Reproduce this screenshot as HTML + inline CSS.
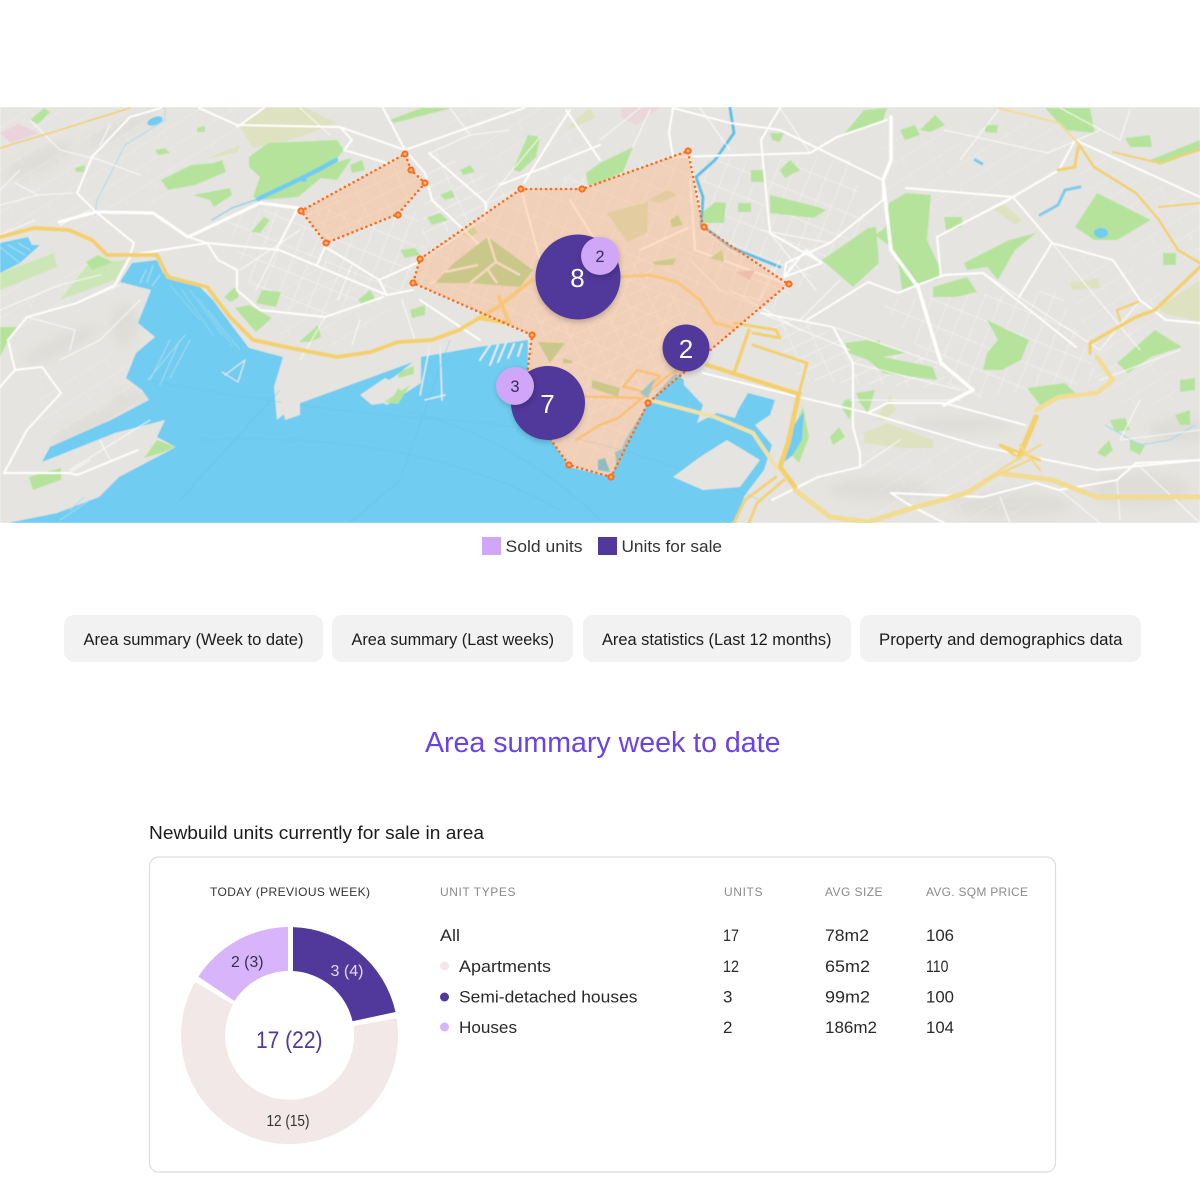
<!DOCTYPE html>
<html lang="en"><head><meta charset="utf-8"><title>Area summary</title>
<style>html,body{margin:0;padding:0;background:#fff}svg{display:block}text{font-family:"Liberation Sans",sans-serif}</style></head>
<body>
<svg xmlns="http://www.w3.org/2000/svg" width="1200" height="1200" viewBox="0 0 1200 1200">
<defs>
<filter id="b" x="0" y="0" width="100%" height="100%"><feGaussianBlur stdDeviation="0.55"/></filter>
<filter id="h" x="-30%" y="-30%" width="160%" height="160%"><feGaussianBlur stdDeviation="5"/></filter>
<filter id="s" x="-30%" y="-30%" width="160%" height="160%"><feGaussianBlur stdDeviation="3"/></filter>
<clipPath id="m"><rect x="0" y="107" width="1200" height="416"/></clipPath>
<pattern id="g1" width="22" height="13" patternUnits="userSpaceOnUse" patternTransform="rotate(-25)"><path d="M0 0H22M0 0V13" stroke="#fff" stroke-width=".9" fill="none" opacity=".7"/></pattern>
<pattern id="g2" width="16" height="24" patternUnits="userSpaceOnUse" patternTransform="rotate(22)"><path d="M0 0H16M0 0V24" stroke="#fff" stroke-width=".9" fill="none" opacity=".65"/></pattern>
<pattern id="g3" width="34" height="18" patternUnits="userSpaceOnUse" patternTransform="rotate(-32)"><path d="M0 0H34M0 0V9" stroke="#fff" stroke-width=".8" fill="none" opacity=".45"/></pattern>
</defs>
<rect width="1200" height="1200" fill="#fff"/>
<g clip-path="url(#m)"><g filter="url(#b)">
<rect x="0" y="107" width="1200" height="416" fill="#e5e4e0"/>
<!-- hill shade -->
<g fill="#cfcdc6" opacity=".3" filter="url(#h)">
<ellipse cx="40" cy="160" rx="36" ry="9" transform="rotate(-25 40 160)"/><ellipse cx="120" cy="130" rx="40" ry="6" transform="rotate(-25 120 130)"/>
<ellipse cx="60" cy="345" rx="40" ry="8" transform="rotate(-25 60 345)"/><ellipse cx="125" cy="325" rx="12" ry="20"/>
<ellipse cx="130" cy="400" rx="18" ry="8"/><ellipse cx="90" cy="425" rx="40" ry="8" transform="rotate(-25 90 425)"/>
<ellipse cx="880" cy="490" rx="50" ry="10"/><ellipse cx="1010" cy="505" rx="60" ry="12"/><ellipse cx="1140" cy="490" rx="50" ry="16"/>
<ellipse cx="1180" cy="430" rx="30" ry="12"/><ellipse cx="960" cy="425" rx="50" ry="6"/></g>
<!-- street grids -->
<g>
<polygon points="413,283 420,259 521,189 688,151 703,227 788,284 648,403 611,477 569,465 532,335" fill="url(#g2)"/>
<polygon points="530,300 640,250 700,330 640,400 570,420" fill="url(#g1)"/>
<polygon points="301,211 405,154 425,183 398,214 326,243" fill="url(#g1)"/>
<polygon points="430,150 520,190 420,250" fill="url(#g1)"/>
<polygon points="420,108 600,108 580,180 520,185" fill="url(#g3)"/>
<polygon points="220,210 420,210 410,290 330,320 260,310" fill="url(#g2)"/>
<polygon points="300,240 400,300 340,350 260,330" fill="url(#g3)"/>
<polygon points="700,160 850,160 880,260 820,270 760,320 710,240" fill="url(#g2)"/>
<polygon points="760,310 930,360 960,390 800,380" fill="url(#g1)"/>
<polygon points="880,300 1060,290 1100,380 960,400" fill="url(#g2)"/>
<polygon points="880,130 1060,120 1050,190 890,230" fill="url(#g3)"/>
<polygon points="1060,240 1160,280 1180,410 1100,400" fill="url(#g3)"/>
<polygon points="1050,130 1200,200 1200,280 1130,250" fill="url(#g3)"/>
<polygon points="0,110 240,108 230,170 90,230 0,230" fill="url(#g3)"/>
<polygon points="0,290 120,250 130,270 30,330 0,340" fill="url(#g3)"/>
<polygon points="40,375 140,350 140,420 40,440" fill="url(#g3)"/>
<polygon points="860,430 1000,440 1040,520 880,520" fill="url(#g3)"/>
</g>
<!-- khaki -->
<g fill="#dfe2c0">
<polygon points="239,125 264,108 306,108 337,123 291,140 253,148"/>
<polygon points="864,433 887,423 933,440 933,448 902,448 864,443"/>
<polygon points="1159,307 1200,280 1200,322 1163,313"/>
<polygon points="207,158 240,145 238,152 215,157"/>
<polygon points="566,128 590,108 596,118 572,128"/>
<polygon points="992,208 1005,205 1022,220 1015,225"/>
<polygon points="1070,283 1098,278 1100,288 1072,290"/>
<polygon points="876,420 890,395 896,410 885,420"/>
<polygon points="880,366 896,362 898,372 884,372" />
</g>
<polygon points="0,133 19,124 38,133 11,143" fill="#ecd2da"/>
<polygon points="622,108 660,107 636,125 622,118" fill="#ecd2da" opacity=".8"/>
<!-- light green -->
<g fill="#cde6b8">
<polygon points="0,273 54,253 57,267 0,290"/>
<polygon points="60,300 88,264 126,260 115,280"/>
</g>
<!-- greens -->
<g fill="#b5e39c">
<polygon points="249,157 268,143 337,140 344,150 333,163 352,158 337,180 321,178 298,197 260,200 253,197 260,177 249,167"/>
<polygon points="161,180 191,165 214,163 222,160 226,172 195,185 168,190"/>
<polygon points="193,195 230,188 232,195 214,207 210,200"/>
<polygon points="251,232 264,217 270,220 260,233"/>
<polygon points="235,308 249,305 272,318 256,332"/>
<polygon points="256,303 262,290 281,292 276,307"/>
<polygon points="299,342 318,325 321,337 310,342"/>
<polygon points="224,297 235,287 239,297 230,302"/>
<polygon points="86,262 98,255 113,262 92,270"/>
<polygon points="0,327 17,327 8,340 0,357"/>
<polygon points="29,477 61,468 61,480 33,490"/>
<polygon points="144,458 157,440 176,447 161,453"/>
<polygon points="390,120 421,108 452,108 394,123"/>
<polygon points="513,170 528,135 540,137 536,157 520,172"/>
<polygon points="600,163 633,147 623,172 600,183 588,185 586,173"/>
<polygon points="427,217 440,213 448,220 432,225"/>
<polygon points="462,233 472,226 478,232 470,238"/>
<polygon points="845,133 864,110 887,108 883,120 849,133"/>
<polygon points="822,260 868,228 876,227 879,263 853,287"/>
<polygon points="889,203 906,193 931,195 927,240 941,270 937,280 918,283 902,290 899,267 891,247 875,235 885,228"/>
<polygon points="770,195 818,207 826,210 814,218 770,213"/>
<rect x="751" y="170" width="14" height="12"/>
<rect x="738" y="203" width="13" height="9"/>
<polygon points="703,212 715,202 726,203 724,223 703,223"/>
<polygon points="770,133 784,133 780,142 772,140"/>
<polygon points="933,287 967,277 977,292 956,297 933,297"/>
<polygon points="944,217 962,217 962,227 946,230"/>
<polygon points="964,263 1009,240 1036,233 1015,250 998,280 987,267 967,270"/>
<polygon points="1075,227 1097,193 1151,220 1117,240 1094,240"/>
<rect x="1163" y="253" width="13" height="12"/>
<polygon points="845,343 868,340 906,353 883,357 933,367 937,380 883,373 868,360 849,353"/>
<polygon points="987,320 1029,340 1021,360 1002,370 983,370 987,353 998,340"/>
<polygon points="1027,388 1065,383 1075,393 1040,405"/>
<polygon points="1117,363 1155,330 1182,347 1151,357 1128,373"/>
<polygon points="1097,453 1109,440 1113,450 1105,457"/>
<polygon points="830,437 839,427 845,437 833,445"/>
<polygon points="845,400 853,398 850,420 841,407"/>
<polygon points="856,393 875,390 868,413 860,403"/>
<polygon points="784,447 803,407 809,437 799,463"/>
<polygon points="1150,160 1200,140 1200,150 1160,165"/>
<polygon points="1125,138 1150,135 1152,147 1130,147"/>
<polygon points="1045,108 1090,108 1095,133 1065,130"/>
<polygon points="985,125 998,125 997,133 985,132"/>
<polygon points="920,130 935,115 945,125 930,132"/>
<polygon points="780,170 790,160 800,170 785,178"/>
<polygon points="1175,415 1190,410 1190,425 1180,425"/>
<polygon points="900,130 915,125 920,135 905,140"/>
<polygon points="1110,420 1125,418 1130,430 1115,432"/>
<polygon points="1130,440 1145,445 1140,455 1130,450"/>
<polygon points="30,120 44,108 50,112 38,124" />
<polygon points="375,480 385,470 395,480 380,487" />
<polygon points="155,150 165,148 170,153 158,155"/>
<polygon points="197,128 205,126 205,132 197,132" />
<polygon points="75,168 85,165 84,172 76,172"/>
<polygon points="235,375 250,368 250,378 238,380"/>
<polygon points="382,395 396,385 402,392 388,400"/>
<polygon points="398,372 414,366 414,374 398,378"/>
<polygon points="350,165 362,160 365,170 352,173"/>
<polygon points="460,170 470,165 475,172 463,175"/>
<polygon points="400,250 415,248 420,255 405,258"/>
<polygon points="440,195 452,190 455,197 445,200"/>
<polygon points="358,300 370,290 375,298 362,305"/>
<polygon points="410,310 425,305 425,315 412,318"/>
<polygon points="860,345 880,340 880,352 860,352"/>
<polygon points="1180,380 1195,378 1195,390 1180,392"/>
</g>
<!-- water -->
<g fill="#70ccf0">
<path d="M8 523L57 513L99 497L119 477L176 447L157 437L165 420L115 433L42 462L50 447L111 420L149 400L142 390L126 378L136 353L155 337L138 323L151 290L120 282L132 263L157 260L163 273L180 282L200 287L213 300L233 327L249 348L283 357L274 387L277 420L295 405L413 362L394 377L367 393L387 405L421 383L421 357L478 347L528 340L528 367L551 440L570 467L611 477L625 440L648 403L675 373L684 380L702 392L704 400L735 415L748 393L775 400L770 415L755 425L772 445L764 470L745 495L734 523Z"/>
<path d="M0 243L28 237L32 245L40 245L20 263L0 273Z"/>
<path d="M790 430L804 412L802 440L792 456L784 462Z"/>
<ellipse cx="155" cy="121" rx="8" ry="4" transform="rotate(-20 155 121)"/>
<ellipse cx="1101" cy="233" rx="7" ry="5"/>
<ellipse cx="304" cy="180" rx="3" ry="2"/><rect x="975" y="158" width="10" height="3" transform="rotate(30 975 158)"/>
</g>
<g fill="none" stroke-linecap="round" stroke-linejoin="round">
<path d="M258 199L298 180L318 170L336 160" stroke="#70ccf0" stroke-width="4.5"/>
<path d="M258 199L232 208L212 220" stroke="#7fcdee" stroke-width="1.3"/>
<path d="M730 108L734 133L715 160L696 177L703 197L701 225L730 247L780 267" stroke="#5cc0e6" stroke-width="3"/>
<path d="M1040 215L1058 205L1065 190L1080 187" stroke="#7ccbee" stroke-width="3"/>
<path d="M165 108L165 120L125 145L110 175L97 200L95 215" stroke="#b5d9ec" stroke-width="1.1"/>
<path d="M1105 425L1140 445L1170 440L1195 425" stroke="#a5d6f0" stroke-width="1.1"/>
<!-- piers -->
<path d="M182 290L213 335M190 290L222 335M198 298L232 345M208 310L240 350M170 285L200 320" stroke="#8ed6f2" stroke-width="1.1" stroke-dasharray="2 1"/>
<path d="M146 270L140 283M153 266L147 282M160 275L152 286" stroke="#a8def4" stroke-width="1.2"/>
<path d="M0 247L20 263M8 245L25 255M18 243L30 250" stroke="#a8def4" stroke-width="1.1"/>
<path d="M170 340L150 380M180 340L160 385M190 340L170 378M148 380L185 335" stroke="#a5dcf2" stroke-width="1"/>
<path d="M430 345L420 395M440 345L442 400M425 400L445 395" stroke="#e8edee" stroke-width="1.5"/>
<path d="M490 345L480 360M498 345L490 365M506 343L498 362M514 344L508 358M522 344L518 356" stroke="#e8edee" stroke-width="2"/>
<path d="M60 520L90 500M70 510L84 497" stroke="#a8def4" stroke-width="1"/>
<path d="M225 375L245 360L238 382L222 372" stroke="#dfe7e8" stroke-width="1.3"/>
<path d="M150 380Q300 410 450 420T760 500M200 440Q420 430 560 510M410 412Q520 440 600 520M450 340L400 480L350 523M280 390L180 500" stroke="#62bee4" stroke-width=".6" opacity=".55"/>
</g>
<!-- land overlays in bay -->
<g fill="#e5e4e0">
<polygon points="673,477 700,457 727,440 760,460 740,487 703,490"/>
<polygon points="684,378 730,395 745,392 735,418 717,413 697,423 703,405 684,385"/>
<polygon points="360,395 385,378 400,385 390,402 372,405"/>
<polygon points="283,357 305,350 300,385 286,395"/>
<polygon points="280,395 300,385 300,415 285,420"/>
</g>
<polygon points="384,402 410,385 398,404" fill="#b5e39c"/>
<!-- minor roads -->
<g fill="none" stroke="#fff" stroke-width="1.1" stroke-linecap="round" stroke-linejoin="round" opacity=".75">
<path d="M15 183L38 195L73 193M0 205L38 195M0 235L35 220M92 157L140 175M110 125L100 145"/>
<path d="M30 120L60 150L100 160M0 190L20 170M60 225L90 210"/>
<path d="M300 108L330 135M450 108L470 135L510 130M470 135L430 153M540 137L500 185L486 203"/>
<path d="M338 300L352 264M276 250L256 290M240 270L300 230M402 300L415 340M325 317L300 360M360 320L352 345"/>
<path d="M0 310L60 285L100 275M27 317L75 330L70 350M140 300L100 340L60 360M150 420L70 470M100 440L110 460"/>
<path d="M77 303L120 285M69 473L90 460"/>
<path d="M600 140L640 108M633 147L650 110M700 108L730 150M780 108L810 153M1060 108L1120 140L1130 110"/>
<path d="M761 230L830 243M770 233L816 290M853 363L960 390M833 327L937 363M761 313L850 350M850 400L960 400M860 467L900 440"/>
<path d="M1052 243L1090 290L1140 350M983 273L1100 350M1140 300L1100 350M1100 380L1180 350M944 130L1048 153L1100 130M1000 108L960 160M950 230L1010 200"/>
<path d="M1120 440L1200 430M1117 480L1120 520M1000 497L1010 523M1060 490L1100 523M1136 463L1200 523M1140 400L1120 440"/>
<path d="M780 260L760 300L720 290L690 260M737 255L700 227"/>
<path d="M840 280L800 320M730 290L800 330"/>
</g>
<!-- major roads -->
<g fill="none" stroke="#fff" stroke-linecap="round" stroke-linejoin="round">
<g stroke-width="1.9">
<path d="M130 255L134 243L96 212L77 193L92 157L130 117L161 108"/>
<path d="M188 237L207 243L279 250L387 295L413 290"/>
<path d="M130 255L207 243"/>
<path d="M207 243L218 260L237 270L237 290L260 310L325 317L383 297"/>
<path d="M8 340L27 317L77 303L115 285L130 257"/>
<path d="M8 340L15 370L0 387"/>
<path d="M15 370L42 367L61 393L27 430L4 473L69 473L77 475L138 450"/>
<path d="M199 108L237 125L340 127L405 150"/>
<path d="M264 108L237 127M340 127L352 140L344 150L387 163"/>
<path d="M383 108L405 150L425 173L432 200L482 247"/>
<path d="M405 150L524 108"/>
<path d="M429 153L486 203L486 217L417 263L379 280L387 295"/>
<path d="M524 183L555 133L570 110"/>
<path d="M566 110L600 160M500 185L600 145"/>
<path d="M298 208L276 250M325 247L317 265M325 247L352 263L379 280"/>
<path d="M673 108L730 123L780 130L883 180L883 200L830 243L786 263L784 277L806 250L822 263L784 277"/>
<path d="M673 108L669 133L673 157"/>
<path d="M673 157L810 153L837 137L887 120"/>
<path d="M780 108L761 140L770 233L822 263"/>
<path d="M807 320L868 282L898 293L918 285L944 275L983 273L1076 347"/>
<path d="M761 313L833 327L853 363L853 427L860 453L860 467L818 477L772 500"/>
<path d="M703 373L799 397L868 413L983 447L1097 470L1200 460"/>
<path d="M868 413L887 403L944 403L1025 425"/>
<path d="M937 237L1013 197L1052 243L1113 260L1140 300L1166 320L1200 323"/>
<path d="M937 237L941 277"/>
<path d="M1013 197L1059 170L1075 140L1200 197"/>
<path d="M906 188L1013 197"/>
<path d="M1052 243L1019 297"/>
<path d="M906 503L944 523M891 493L906 503M891 493L983 497L1036 483L1059 490L1117 480L1136 463L1200 460"/>
<path d="M521 189L540 260L560 300M688 151L700 210M570 200L620 280M690 180L695 250L790 285M688 228L640 250"/>
<path d="M420 300L480 340M490 270L430 283"/>
</g>
<path d="M59 222L96 212L153 213L188 237L260 203L298 208" stroke-width="3"/>
<path d="M891 117L891 160L883 180L891 250L918 287L941 363L973 390L944 405" stroke-width="3.5"/>
</g>
<!-- highways -->
<g fill="none" stroke-linecap="round" stroke-linejoin="round">
<path d="M0 148L50 133L130 108" stroke="#f3cf6b" stroke-width="1.6"/>
<path d="M0 237L34 228L69 230L92 240L107 255L157 255L168 277L207 287L230 317L253 340L291 348L337 357L371 352L398 342L432 340L459 330L498 307L532 280" stroke="#f4d06c" stroke-width="4"/>
<path d="M499 297L509 323L478 318" stroke="#f4d06c" stroke-width="4"/>
<path d="M707 365L795 393" stroke="#f3d06a" stroke-width="4.5"/>
<path d="M799 393L788 443L780 467L795 487" stroke="#f3d06a" stroke-width="5"/>
<path d="M753 345L807 363L799 393" stroke="#f3d06a" stroke-width="3"/>
<path d="M749 330L734 373" stroke="#f3d06a" stroke-width="3.5"/>
<path d="M734 323L776 330L780 338L753 333" stroke="#f3d06a" stroke-width="3"/>
<path d="M619 277L650 275L677 282L700 300L715 323L734 328" stroke="#f4d06c" stroke-width="3"/>
<path d="M650 400L715 417L753 433L776 467" stroke="#f3e1a4" stroke-width="4"/>
<path d="M795 490L830 517L868 522L906 510L967 493L998 473L1052 480L1097 497L1200 497" stroke="#f2dc90" stroke-width="5"/>
<path d="M776 477L745 500L734 523M784 480L757 503L749 523" stroke="#f3d277" stroke-width="3"/>
<path d="M1036 417L1019 457" stroke="#f3d06a" stroke-width="5.5"/>
<path d="M1036 410L1059 397L1097 393L1113 380L1097 357" stroke="#f4dc94" stroke-width="4.5"/>
<path d="M1090 353L1090 343L1136 317L1155 310L1200 267" stroke="#f3d06a" stroke-width="3.5"/>
<path d="M1117 310L1138 302M1117 310L1120 320" stroke="#f3d06a" stroke-width="2.5"/>
<path d="M1078 143L1094 167L1136 193L1159 220L1178 250L1200 263" stroke="#f3d06a" stroke-width="2.5"/>
<path d="M998 108L1059 123L1078 143" stroke="#f4dc94" stroke-width="2"/>
<path d="M1113 152L1159 163L1200 150" stroke="#f3d06a" stroke-width="2"/>
<path d="M1159 207L1200 203" stroke="#f3d06a" stroke-width="2"/>
<path d="M1075 165L1078 148M1058 170L1075 167" stroke="#f3d06a" stroke-width="3"/>
<path d="M1000 445L1015 455M1000 445L1018 452L1040 460" stroke="#f3d06a" stroke-width="3"/>
<path d="M1000 470L1040 445M985 480L1030 460M1040 470L1020 445" stroke="#f3d88a" stroke-width="2.5"/>
<path d="M576 440L600 425L618 418L640 400L660 382L676 370M623 387L637 370L660 376L645 392L625 387M520 395L640 398" stroke="#f4c964" stroke-width="2.6"/>
</g>
</g>
<!-- area fill -->
<polygon points="521,189 582,189 688,151 703,227 788,284 648,403 611,477 569,465 551,440 527,375 532,335 413,283 420,259" fill="#ffb98a" opacity=".45"/>
<polygon points="301,211 405,154 411,170 425,183 398,214 326,243" fill="#ffb98a" opacity=".45"/>
<!-- olive/khaki in area -->
<g filter="url(#b)">
<polygon points="435,283 455,262 488,237 533,270 520,287 470,283" fill="#c9c888"/>
<path d="M488 237L496 262L470 283M496 262L520 275M445 272L478 265M488 270L497 283" stroke="#f6d8c0" stroke-width="2.5" fill="none"/>
<polygon points="607,213 648,202 647,233 627,242" fill="#e3cc9f"/>
<polygon points="648,200 667,190 677,195 660,203" fill="#e3cc9f"/>
<polygon points="670,220 678,215 683,225 672,227" fill="#cfc987"/>
<polygon points="710,258 722,250 724,262" fill="#d4c98a"/>
<polygon points="652,262 676,258 673,265 655,265" fill="#cfc987"/>
<polygon points="735,272 755,270 750,280" fill="#f0bdaa" />
<polygon points="538,342 565,343 550,363" fill="#c9c888" />
<polygon points="592,380 620,388 618,397 592,388" fill="#c9c888"/>
<polygon points="563,358 573,361 572,363 563,363" fill="#c9c888"/>
<polygon points="598,470 610,472 605,458 598,460" fill="#8fbcc4"/>
<polygon points="617,470 626,448 615,452" fill="#9cc4c4"/>
<polygon points="640,393 655,378 648,398" fill="#9cc4c4"/>
</g>
<!-- dotted outlines -->
<g fill="none" stroke="#ff6d1a" stroke-width="2.6" stroke-linecap="round" stroke-dasharray="0 5">
<polygon points="521,189 582,189 688,151 703,227 788,284 648,403 611,477 569,465 551,440 527,375 532,335 413,283 420,259"/>
<polygon points="301,211 405,154 411,170 425,183 398,214 326,243"/>
</g>
<g fill="#ffb27a" stroke="#ff6d1a" stroke-width="2">
<circle cx="521" cy="189" r="2.6"/><circle cx="582" cy="189" r="2.6"/><circle cx="688" cy="151" r="2.6"/><circle cx="704" cy="227" r="2.6"/><circle cx="789" cy="284" r="2.6"/><circle cx="648" cy="403" r="2.6"/><circle cx="611" cy="477" r="2.6"/><circle cx="569" cy="465" r="2.6"/><circle cx="532" cy="335" r="2.6"/><circle cx="413" cy="283" r="2.6"/><circle cx="420" cy="259" r="2.6"/>
<circle cx="301" cy="211" r="2.6"/><circle cx="405" cy="154" r="2.6"/><circle cx="411" cy="170" r="2.6"/><circle cx="425" cy="183" r="2.6"/><circle cx="398" cy="215" r="2.6"/><circle cx="326" cy="243" r="2.6"/>
</g>
<!-- bubbles -->
<g fill="#000" opacity=".22" filter="url(#s)">
<circle cx="578" cy="280" r="42"/><circle cx="686" cy="351" r="23"/><circle cx="548" cy="406" r="36"/>
</g>
<circle cx="578" cy="277" r="42.5" fill="#51389b"/>
<circle cx="686" cy="348" r="23.5" fill="#51389b"/>
<circle cx="548" cy="403" r="37" fill="#51389b"/>
<circle cx="601" cy="258" r="19" fill="#000" opacity=".2" filter="url(#s)"/>
<circle cx="516" cy="388" r="19" fill="#000" opacity=".2" filter="url(#s)"/>
<circle cx="600" cy="256" r="19" fill="#d0a6f8"/>
<circle cx="515" cy="386" r="19" fill="#d0a6f8"/>
<g text-anchor="middle">
<text x="577.500" y="287" font-size="26" fill="#fff">8</text>
<text x="686" y="358" font-size="26" fill="#fff">2</text>
<text x="547.500" y="413" font-size="26" fill="#fff">7</text>
<text x="600" y="262" font-size="16.500" fill="#3a2a60">2</text>
<text x="515" y="392" font-size="16.500" fill="#3a2a60">3</text>
</g>
</g>
<!-- legend -->
<rect x="482" y="537" width="19" height="18" fill="#d0a6f8"/>
<rect x="598" y="537" width="19" height="18" fill="#51389b"/>
<g font-size="17" fill="#333">
<text x="505.500" y="552" textLength="77" lengthAdjust="spacingAndGlyphs">Sold units</text>
<text x="621.500" y="552" textLength="100.500" lengthAdjust="spacingAndGlyphs">Units for sale</text>
</g>
<!-- buttons -->
<g fill="#f2f2f2">
<rect x="64" y="615" width="259" height="47" rx="10"/>
<rect x="332" y="615" width="241" height="47" rx="10"/>
<rect x="583" y="615" width="268" height="47" rx="10"/>
<rect x="860" y="615" width="281" height="47" rx="10"/>
</g>
<g font-size="16.500" fill="#1c1c1c">
<text x="83.500" y="645" textLength="220" lengthAdjust="spacingAndGlyphs">Area summary (Week to date)</text>
<text x="351.500" y="645" textLength="202.500" lengthAdjust="spacingAndGlyphs">Area summary (Last weeks)</text>
<text x="602" y="645" textLength="229.500" lengthAdjust="spacingAndGlyphs">Area statistics (Last 12 months)</text>
<text x="879" y="645" textLength="243.500" lengthAdjust="spacingAndGlyphs">Property and demographics data</text>
</g>
<text x="425" y="752" font-size="29" fill="#6a42e6" textLength="355.500" lengthAdjust="spacingAndGlyphs">Area summary week to date</text>
<text x="149" y="839" font-size="18.500" fill="#1c1c1c" textLength="335" lengthAdjust="spacingAndGlyphs">Newbuild units currently for sale in area</text>
<!-- card -->
<rect x="149.500" y="857" width="906" height="315" rx="9" fill="#fff" stroke="#dcdcdc" stroke-width="1.200"/>
<g font-size="12" fill="#333">
<text x="210" y="896" textLength="160" lengthAdjust="spacing">TODAY (PREVIOUS WEEK)</text>
</g>
<g font-size="12" fill="#8a8a8a">
<text x="440" y="896" textLength="75.500" lengthAdjust="spacing">UNIT TYPES</text>
<text x="724" y="896" textLength="38.500" lengthAdjust="spacing">UNITS</text>
<text x="825" y="896" textLength="57.500" lengthAdjust="spacing">AVG SIZE</text>
<text x="926" y="896" textLength="102" lengthAdjust="spacing">AVG. SQM PRICE</text>
</g>
<!-- donut -->
<path d="M396.600 1018.200A108.500 108.500 0 1 1 195.100 982.100L233 1004.500A64.500 64.500 0 1 0 353.500 1026Z" fill="#f2e8e7"/>
<path d="M293 927.100A108.500 108.500 0 0 1 395.500 1012L352.500 1021.300A64.500 64.500 0 0 0 293 971Z" fill="#51389b"/>
<path d="M288 927A108.500 108.500 0 0 0 198.400 976.600L234.500 1001A64.500 64.500 0 0 1 288 971Z" fill="#d8b4fb"/>
<text x="231" y="967" font-size="16" fill="#3a2d50" textLength="32.500" lengthAdjust="spacingAndGlyphs">2 (3)</text>
<text x="330.500" y="976" font-size="16" fill="#e4dcf2" textLength="33" lengthAdjust="spacingAndGlyphs">3 (4)</text>
<text x="266.500" y="1126" font-size="16" fill="#333" textLength="43" lengthAdjust="spacingAndGlyphs">12 (15)</text>
<text x="256" y="1048" font-size="24" fill="#51389b" textLength="66.500" lengthAdjust="spacingAndGlyphs">17 (22)</text>
<!-- table -->
<circle cx="444.500" cy="966" r="4.500" fill="#f2e8e7"/>
<circle cx="444.500" cy="997" r="4.500" fill="#51389b"/>
<circle cx="444.500" cy="1027" r="4.500" fill="#d8b4fb"/>
<g font-size="17" fill="#2a2a2a">
<text x="440" y="941" textLength="20" lengthAdjust="spacingAndGlyphs">All</text>
<text x="459" y="972" textLength="92" lengthAdjust="spacingAndGlyphs">Apartments</text>
<text x="459" y="1002.500" textLength="178.500" lengthAdjust="spacingAndGlyphs">Semi-detached houses</text>
<text x="459" y="1033" textLength="58" lengthAdjust="spacingAndGlyphs">Houses</text>
<text x="723" y="941" textLength="16" lengthAdjust="spacingAndGlyphs">17</text>
<text x="723" y="972" textLength="16" lengthAdjust="spacingAndGlyphs">12</text>
<text x="723" y="1002.500">3</text>
<text x="723" y="1033">2</text>
<text x="825" y="941" textLength="44" lengthAdjust="spacingAndGlyphs">78m2</text>
<text x="825" y="972" textLength="45" lengthAdjust="spacingAndGlyphs">65m2</text>
<text x="825" y="1002.500" textLength="45" lengthAdjust="spacingAndGlyphs">99m2</text>
<text x="825" y="1033" textLength="52" lengthAdjust="spacingAndGlyphs">186m2</text>
<text x="926" y="941" textLength="28" lengthAdjust="spacingAndGlyphs">106</text>
<text x="926" y="972" textLength="22.500" lengthAdjust="spacingAndGlyphs">110</text>
<text x="926" y="1002.500" textLength="28" lengthAdjust="spacingAndGlyphs">100</text>
<text x="926" y="1033" textLength="28" lengthAdjust="spacingAndGlyphs">104</text>
</g>
</svg>
</body></html>
